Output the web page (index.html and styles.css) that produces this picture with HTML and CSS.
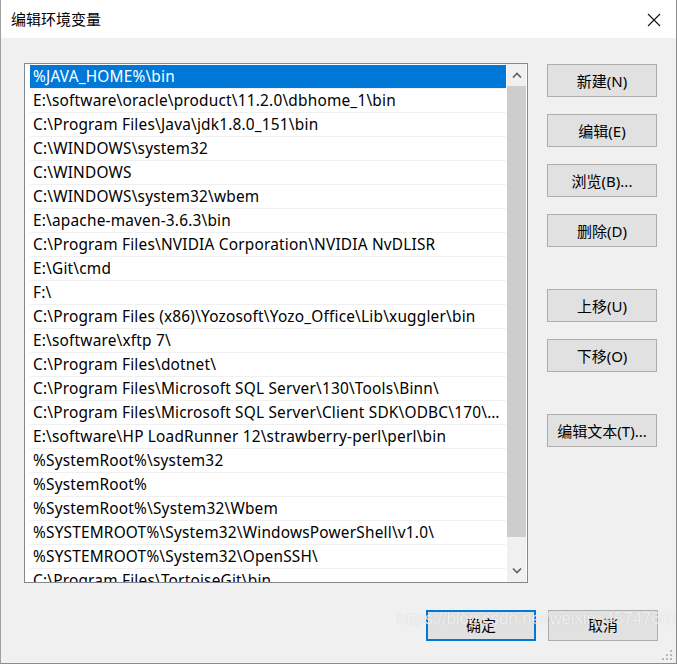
FILE: index.html
```html
<!DOCTYPE html>
<html lang="zh-CN">
<head>
    <meta charset="UTF-8">
    <meta name="viewport" content="width=device-width, initial-scale=1.0">
    <title>编辑环境变量</title>
    <link rel="stylesheet" href="styles.css">
</head>
<body>
    <div class="window">
        <div class="titlebar">
            <span class="title">编辑环境变量</span>
            <svg class="close" width="14" height="14" viewBox="0 0 14 14">
                <path d="M1 1 L13 13 M13 1 L1 13" stroke="#111" stroke-width="1.1" fill="none"/>
            </svg>
        </div>
        <div class="content">
            <div class="main">
                <div class="listbox">
                    <div class="rows">
                        <div class="row selected">%JAVA_HOME%\bin</div>
                        <div class="row">E:\software\oracle\product\11.2.0\dbhome_1\bin</div>
                        <div class="row">C:\Program Files\Java\jdk1.8.0_151\bin</div>
                        <div class="row">C:\WINDOWS\system32</div>
                        <div class="row">C:\WINDOWS</div>
                        <div class="row">C:\WINDOWS\system32\wbem</div>
                        <div class="row">E:\apache-maven-3.6.3\bin</div>
                        <div class="row">C:\Program Files\NVIDIA Corporation\NVIDIA NvDLISR</div>
                        <div class="row">E:\Git\cmd</div>
                        <div class="row">F:\</div>
                        <div class="row">C:\Program Files (x86)\Yozosoft\Yozo_Office\Lib\xuggler\bin</div>
                        <div class="row">E:\software\xftp 7\</div>
                        <div class="row">C:\Program Files\dotnet\</div>
                        <div class="row">C:\Program Files\Microsoft SQL Server\130\Tools\Binn\</div>
                        <div class="row">C:\Program Files\Microsoft SQL Server\Client SDK\ODBC\170\Tools\Binn\</div>
                        <div class="row">E:\software\HP LoadRunner 12\strawberry-perl\perl\bin</div>
                        <div class="row">%SystemRoot%\system32</div>
                        <div class="row">%SystemRoot%</div>
                        <div class="row">%SystemRoot%\System32\Wbem</div>
                        <div class="row">%SYSTEMROOT%\System32\WindowsPowerShell\v1.0\</div>
                        <div class="row">%SYSTEMROOT%\System32\OpenSSH\</div>
                        <div class="row">C:\Program Files\TortoiseGit\bin</div>
                    </div>
                    <div class="scrollbar">
                        <div class="arrow">
                            <svg width="10" height="6" viewBox="0 0 10 6"><path d="M1 5.5 L5 1.5 L9 5.5" stroke="#606060" stroke-width="1.6" fill="none"/></svg>
                        </div>
                        <div class="thumb"></div>
                        <div class="track"></div>
                        <div class="arrow">
                            <svg width="10" height="6" viewBox="0 0 10 6"><path d="M1 0.5 L5 4.5 L9 0.5" stroke="#606060" stroke-width="1.6" fill="none"/></svg>
                        </div>
                    </div>
                </div>
                <div class="side">
                    <div class="group">
                        <button class="btn">新建(N)</button>
                        <button class="btn">编辑(E)</button>
                        <button class="btn">浏览(B)...</button>
                        <button class="btn">删除(D)</button>
                    </div>
                    <div class="group">
                        <button class="btn">上移(U)</button>
                        <button class="btn">下移(O)</button>
                    </div>
                    <div class="group">
                        <button class="btn">编辑文本(T)...</button>
                    </div>
                </div>
            </div>
            <div class="footer">
                <button class="btn default">确定</button>
                <button class="btn">取消</button>
            </div>
            <div class="watermark">https://blog.csdn.net/weixin_45747607</div>
            <svg class="grip" width="11" height="11" viewBox="0 0 11 11">
                <rect x="8" y="0" width="2" height="2" fill="#b8b8b8"/>
                <rect x="4" y="4" width="2" height="2" fill="#b8b8b8"/>
                <rect x="8" y="4" width="2" height="2" fill="#b8b8b8"/>
                <rect x="0" y="8" width="2" height="2" fill="#b8b8b8"/>
                <rect x="4" y="8" width="2" height="2" fill="#b8b8b8"/>
                <rect x="8" y="8" width="2" height="2" fill="#b8b8b8"/>
            </svg>
        </div>
    </div>
</body>
</html>
```

FILE: styles.css
```css
body{
    margin: 0;
    font-family: "Noto Sans", "Noto Sans CJK SC", sans-serif;
    font-size: 15px;
    color: #000;
    background: #f0f0f0;
}
.window{
    position: relative;
    width: 677px;
    height: 664px;
    box-sizing: border-box;
    border: 1px solid #8c8c8c;
    border-top: none;
    border-left-color: #a0a0a0;
    background: #f0f0f0;
    overflow: hidden;
}
.titlebar{
    height: 38px;
    background: #fff;
    display: flex;
    align-items: center;
    justify-content: space-between;
    padding: 0 15px 0 10px;
}
.title{
    font-size: 15px;
    padding-bottom: 1px;
}
.close{
    margin-top: 1px;
}
.content{
    position: relative;
    height: 625px;
    padding: 25px 18px 0 23px;
    box-sizing: border-box;
}
.main{
    display: flex;
    gap: 19px;
}
.listbox{
    width: 504px;
    height: 520px;
    box-sizing: border-box;
    border: 1px solid #828790;
    background: #fff;
    display: flex;
    padding: 0 1px 0 5px;
}
.rows{
    width: 476px;
    padding-top: 1px;
    overflow: hidden;
}
.row{
    height: 23px;
    line-height: 24px;
    border-bottom: 1px solid #f0f0f0;
    padding-left: 3px;
    font-size: 15.4px;
    letter-spacing: 0.2px;
    white-space: nowrap;
    overflow: hidden;
    text-overflow: ellipsis;
}
.row.selected{
    background: #0078d7;
    color: #fff;
}
.scrollbar{
    width: 19px;
    margin-left: 1px;
    background: #f0f0f0;
    display: flex;
    flex-direction: column;
}
.arrow{
    height: 22px;
    display: flex;
    align-items: center;
    justify-content: center;
}
.thumb{
    height: 451px;
    background: #cdcdcd;
}
.track{
    flex: 1;
}
.side{
    display: flex;
    flex-direction: column;
    gap: 42px;
    padding-top: 1px;
}
.group{
    display: flex;
    flex-direction: column;
    gap: 17px;
}
.btn{
    width: 110px;
    height: 33px;
    box-sizing: border-box;
    background: #e1e1e1;
    border: 1px solid #adadad;
    font-family: inherit;
    font-size: 15px;
    color: #000;
    padding: 0;
    margin: 0;
}
.footer{
    display: flex;
    justify-content: flex-end;
    gap: 12px;
    margin-top: 27px;
}
.footer .btn{
    height: 31px;
    padding-bottom: 2px;
}
.btn.default{
    border: 2px solid #0078d7;
}
.watermark{
    position: absolute;
    left: 396px;
    top: 571px;
    font-family: "Liberation Sans", Arial, sans-serif;
    font-size: 17px;
    color: rgba(255, 255, 255, 0.75);
    text-shadow: 0 0 1px rgba(120, 120, 120, 0.35);
    letter-spacing: -0.2px;
}
.grip{
    position: absolute;
    right: 3px;
    bottom: 2px;
}
```
